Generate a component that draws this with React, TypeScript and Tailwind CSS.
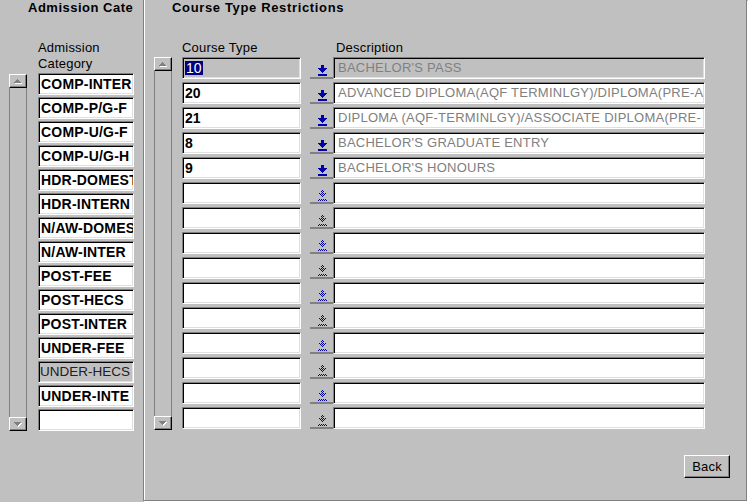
import React from "react";

// values as far as the narrow item shows them
const categories = [
    "COMP-INTER",
    "COMP-P/G-F",
    "COMP-U/G-F",
    "COMP-U/G-H",
    "HDR-DOMEST",
    "HDR-INTERN",
    "N/AW-DOMES",
    "N/AW-INTER",
    "POST-FEE",
    "POST-HECS",
    "POST-INTER",
    "UNDER-FEE",
    "UNDER-HECS",
    "UNDER-INTE",
    "",
];

const courseTypes = [
    { code: "10", desc: "BACHELOR'S PASS" },
    { code: "20", desc: "ADVANCED DIPLOMA(AQF TERMINLGY)/DIPLOMA(PRE-A" },
    { code: "21", desc: "DIPLOMA (AQF-TERMINLGY)/ASSOCIATE DIPLOMA(PRE-" },
    { code: "8", desc: "BACHELOR'S GRADUATE ENTRY" },
    { code: "9", desc: "BACHELOR'S HONOURS" },
    ...Array.from({ length: 10 }, () => ({ code: "", desc: "" })),
];

const sunken =
    "border border-t-[#808080] border-l-[#808080] border-b-white border-r-white shadow-[inset_1px_1px_0_#000,inset_-1px_-1px_0_#dfdfdf]";

function ScrollButton({ dir }: { dir: "up" | "down" }) {
    const rows = dir === "up" ? [0, 1, 2, 3] : [3, 2, 1, 0];
    return (
        <div className="h-[14px] w-full shrink-0 bg-[#c0c0c0] border border-t-white border-l-white border-b-black border-r-black shadow-[inset_-1px_-1px_0_#808080] flex items-center justify-center">
            <svg width="8" height="5" shapeRendering="crispEdges">
                {rows.map((w, i) => (
                    <rect key={"s" + i} x={4 - w} y={i + 1} width={w * 2 + 1} height={1} fill="#ffffff" />
                ))}
                {rows.map((w, i) => (
                    <rect key={"f" + i} x={3 - w} y={i} width={w * 2 + 1} height={1} fill="#808080" />
                ))}
            </svg>
        </div>
    );
}

function ScrollBar({ className }: { className: string }) {
    return (
        <div className={"flex flex-col w-[18px] shrink-0 " + className}>
            <ScrollButton dir="up" />
            <div className="flex-1 border-x border-[#808080]" />
            <ScrollButton dir="down" />
        </div>
    );
}

function LovArrow({ enabled, id }: { enabled: boolean; id: string }) {
    const fill = enabled ? "#0000a8" : `url(#${id})`;
    return (
        <svg width="9" height="11" shapeRendering="crispEdges">
            <defs>
                <pattern id={id} width="2" height="2" patternUnits="userSpaceOnUse">
                    <rect x="0" y="0" width="1" height="1" fill="#0000a8" />
                    <rect x="1" y="1" width="1" height="1" fill="#0000a8" />
                </pattern>
            </defs>
            <rect x="3" y="0" width="3" height="3" fill={fill} />
            <rect x="0" y="3" width="9" height="1" fill={fill} />
            <rect x="1" y="4" width="7" height="1" fill={fill} />
            <rect x="2" y="5" width="5" height="1" fill={fill} />
            <rect x="3" y="6" width="3" height="1" fill={fill} />
            <rect x="4" y="7" width="1" height="1" fill={fill} />
            <rect x="0" y="9" width="9" height="2" fill={fill} />
        </svg>
    );
}

export default function App() {
    return (
        <div className="w-[748px] h-[502px] bg-[#c0c0c0] flex overflow-hidden font-['Liberation_Sans',Arial,sans-serif] text-black">
            {/* left block: admission categories */}
            <div className="w-[143px] shrink-0 flex flex-col">
                <div className="h-[40px] pl-[28px] text-[13px] leading-[16px] font-bold tracking-[0.5px] whitespace-nowrap">
                    Admission Cate
                </div>
                <div className="h-[33px] pl-[38px] text-[13px] leading-[16px] tracking-[0.2px]">
                    Admission
                    <br />
                    Category
                </div>
                <div className="flex pl-[9px]">
                    <ScrollBar className="mt-[1px] h-[357px]" />
                    <div className="ml-[11px] flex flex-col gap-[2px]">
                        {categories.map((c, i) => {
                            const current = c === "UNDER-HECS";
                            return (
                                <div
                                    key={i}
                                    className={
                                        "w-[96px] h-[22px] flex items-center overflow-hidden whitespace-nowrap " +
                                        sunken +
                                        (current
                                            ? " bg-[#c0c0c0] pl-[1px] text-[13.5px] text-[#202020]"
                                            : " bg-white pl-[2px] text-[14px] font-bold tracking-[0.2px]")
                                    }
                                >
                                    {c}
                                </div>
                            );
                        })}
                    </div>
                </div>
            </div>

            {/* right block: course type restrictions */}
            <div className="w-[604px] h-[501px] shrink-0 flex flex-col border-l border-r border-b border-[#808080] shadow-[inset_1px_0_0_#fff,1px_1px_0_#fff]">
                <div className="h-[40px] pl-[28px] text-[13px] leading-[16px] font-bold tracking-[0.65px] whitespace-nowrap">
                    Course Type Restrictions
                </div>
                <div className="h-[17px] flex pl-[38px] text-[13px] leading-[16px] tracking-[0.2px]">
                    <div className="w-[154px]">Course Type</div>
                    <div>Description</div>
                </div>
                <div className="flex pl-[10px]">
                    <ScrollBar className="h-[373px]" />
                    <div className="ml-[10px] flex flex-col gap-[3px]">
                        {courseTypes.map((r, i) => {
                            const current = i === 0;
                            const filled = r.code !== "";
                            return (
                                <div key={i} className="flex h-[22px]">
                                    <div
                                        className={
                                            "w-[119px] h-[22px] flex items-center pl-[2px] overflow-hidden whitespace-nowrap " +
                                            sunken +
                                            (current ? " bg-[#c0c0c0] text-[14px]" : " bg-white text-[14px] font-bold")
                                        }
                                    >
                                        {current ? (
                                            <span className="bg-[#000080] text-white px-[1px] leading-[14px]">{r.code}</span>
                                        ) : (
                                            r.code
                                        )}
                                    </div>
                                    <div className="ml-[9px] w-[23px] h-[22px] border-b-2 border-[#808080] flex items-end justify-center pb-[1px] pl-[2px]">
                                        <LovArrow enabled={filled} id={"dither" + i} />
                                    </div>
                                    <div
                                        className={
                                            "w-[372px] h-[22px] flex items-center pl-[4px] overflow-hidden whitespace-nowrap text-[13px] tracking-[0.25px] text-[#808080] " +
                                            sunken +
                                            (current ? " bg-[#c0c0c0]" : " bg-white")
                                        }
                                    >
                                        {r.desc}
                                    </div>
                                </div>
                            );
                        })}
                    </div>
                </div>
                <div className="flex justify-end pr-[16px] mt-[25px]">
                    <button className="w-[46px] h-[23px] bg-[#c0c0c0] border border-t-white border-l-white border-b-black border-r-black shadow-[inset_-1px_-1px_0_#808080] text-[13px] tracking-[0.2px] flex items-center justify-center">
                        Back
                    </button>
                </div>
            </div>
        </div>
    );
}
